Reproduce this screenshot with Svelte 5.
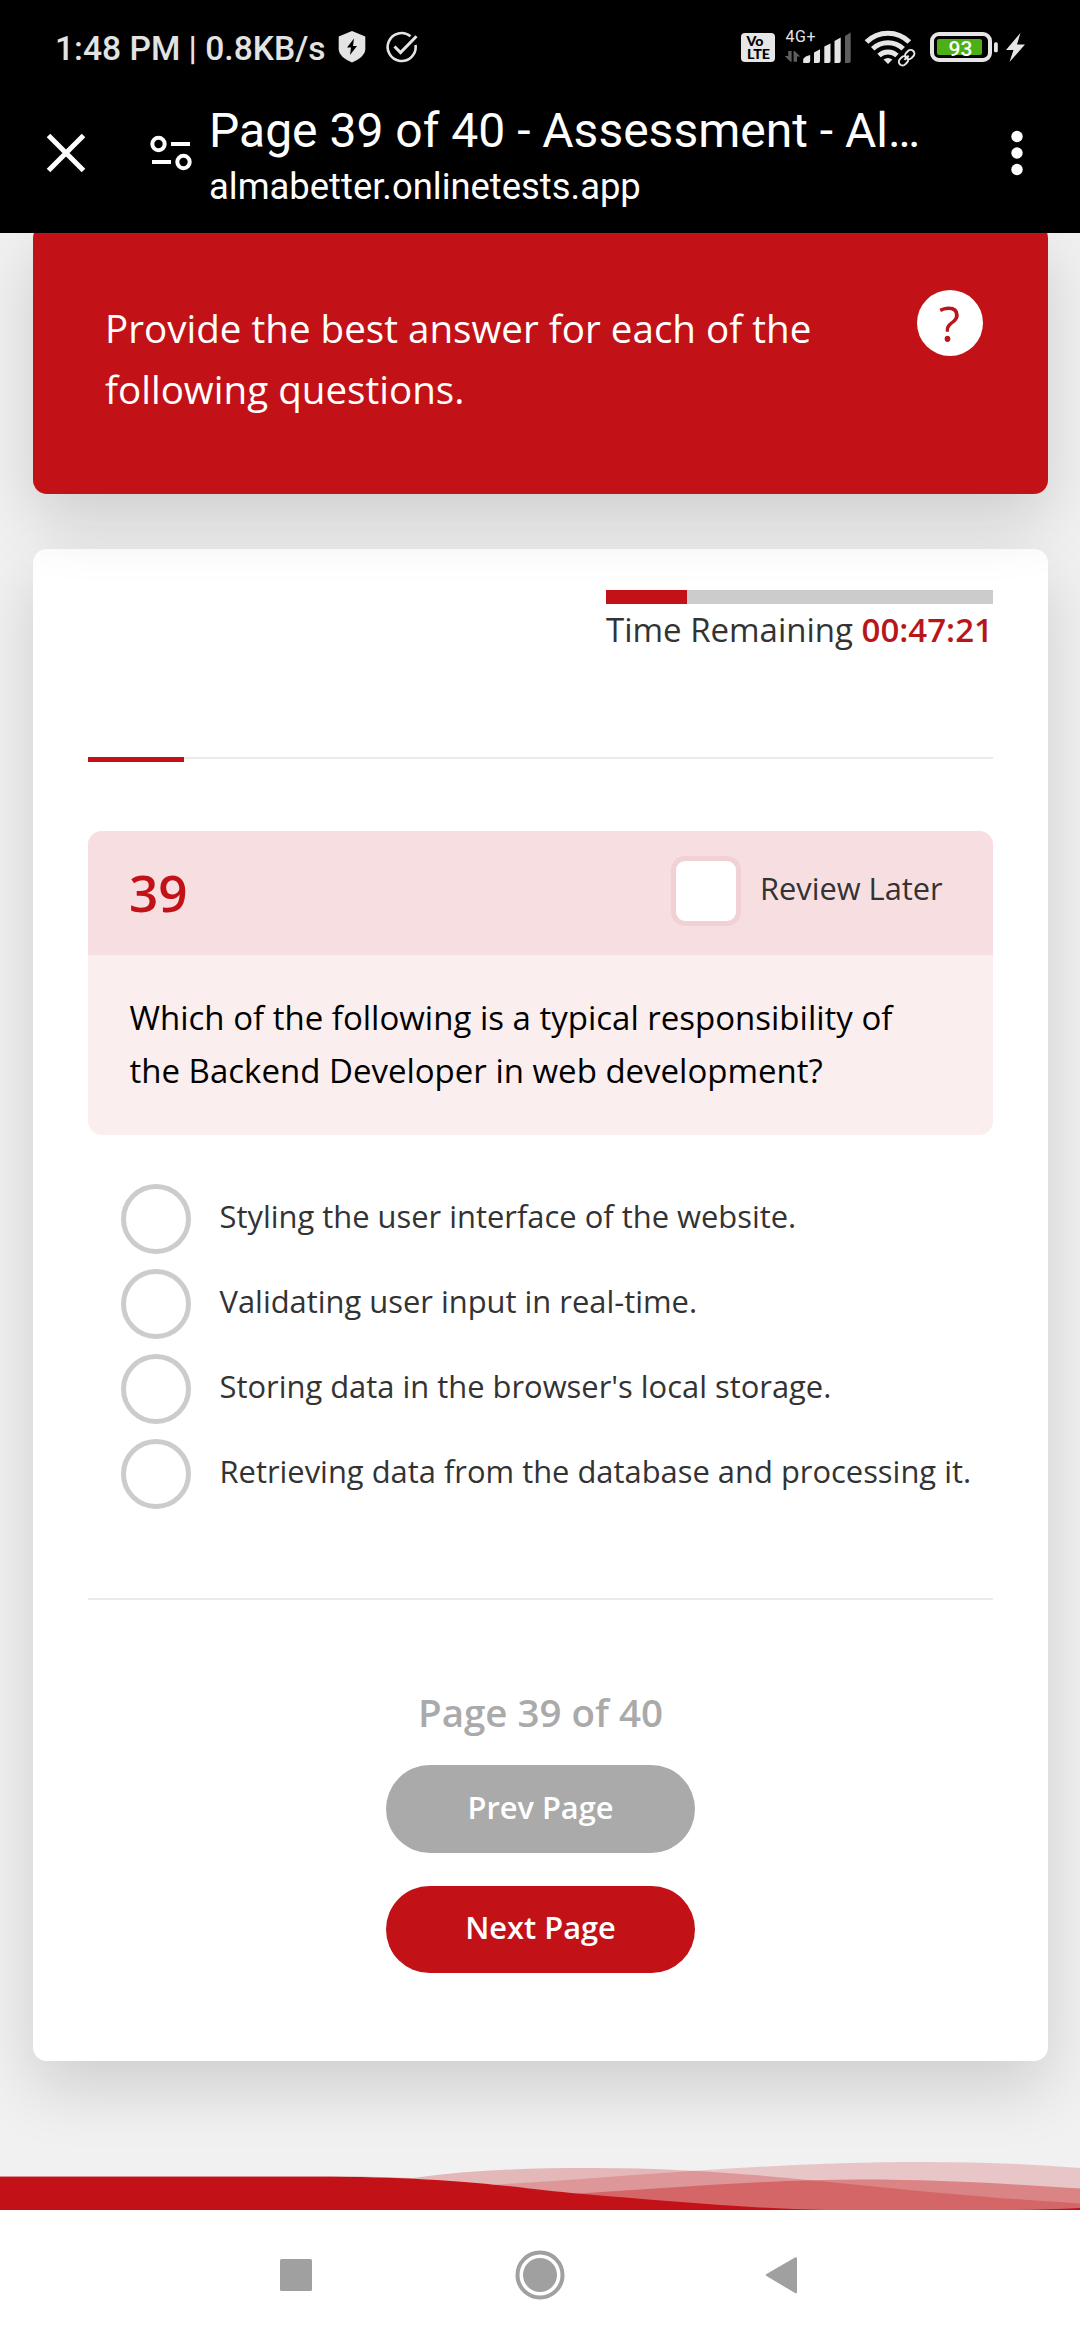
<script>
  const options = [
    'Styling the user interface of the website.',
    'Validating user input in real-time.',
    "Storing data in the browser's local storage.",
    'Retrieving data from the database and processing it.'
  ];
  const timeUsed = 21;
  const pageProgress = 10.6;
</script>

<div class="screen">
  <header>
    <div class="status">
      <span class="clock">1:48 PM | 0.8KB/s</span>
      <svg class="shield" width="28" height="40" viewBox="338 28 28 40">
        <path d="M352 31 L365.3 36.5 V49 C365.3 55 359 59.500 352 62.500 C345 59.500 338.700 55 338.700 49 V36.500 Z" fill="#e4e4e4" />
        <path d="M354 38.500 L347 47.500 H351 L350 55 L357 46 H353 Z" fill="#000" />
      </svg>
      <svg class="done" width="34" height="40" viewBox="386 28 34 40" fill="none" stroke="#e4e4e4" stroke-width="2.600">
        <path d="M410.500 36.200 A14 14 0 1 0 415.500 45" />
        <path d="M394.500 46.500 L400.500 52.500 L416.500 36.200" stroke-width="3" />
      </svg>
      <span class="grow"></span>
      <svg width="34" height="40" viewBox="741 28 34 40">
        <rect x="741" y="33" width="34" height="29" rx="4" fill="#e6e6e6" />
        <text x="746.500" y="46" class="volte" textLength="17" lengthAdjust="spacingAndGlyphs">Vo</text>
        <text x="747" y="58.700" class="volte" textLength="23" lengthAdjust="spacingAndGlyphs">LTE</text>
      </svg>
      <svg class="cell" width="68" height="40" viewBox="784 28 68 40">
        <text x="785.500" y="42" class="net" textLength="30">4G+</text>
        <g fill="#5e5e5e">
          <path d="M788.200 51 H791.600 V61.800 H790.500 L784.700 56 H788.200 Z" />
          <path d="M793.600 61.800 V51 H794.700 L800.200 56.500 H797 V61.800 Z" />
          <path d="M845 63 V36 L850.700 32.500 V61 Q850.700 63 848.700 63 Z" />
        </g>
        <g fill="#e6e6e6">
          <path d="M803.200 63 V59 Q805 56 810.200 55 V61 Q810.200 63 808.200 63 Z" />
          <path d="M814 63 V52.500 L820 49.300 V61 Q820 63 818 63 Z" />
          <path d="M824.300 63 V46.500 L830.500 43.500 V61 Q830.500 63 828.500 63 Z" />
          <path d="M834.500 63 V41 L840.700 37.500 V61 Q840.700 63 838.700 63 Z" />
        </g>
      </svg>
      <svg class="wifi" width="52" height="40" viewBox="864 28 52 40" fill="none" stroke="#e6e6e6">
        <path d="M866.500 42 A30.500 30.500 0 0 1 909.300 42" stroke-width="5.200" />
        <path d="M872.700 48.800 A22 22 0 0 1 903.200 48.800" stroke-width="5" />
        <path d="M879 55.600 A13 13 0 0 1 897 55.600" stroke-width="4.800" />
        <path d="M883.500 59.500 Q888 56.500 892.400 59.500 L888 64 Z" fill="#e6e6e6" stroke="none" />
        <g transform="rotate(-45 906.600 57.700)">
          <rect x="897.200" y="54" width="10.500" height="7.600" rx="3.800" stroke="#000" stroke-width="5" />
          <rect x="897.200" y="54" width="10" height="7.400" rx="3.700" stroke-width="2" />
          <rect x="906" y="54" width="10" height="7.400" rx="3.700" stroke-width="2" />
          <path d="M903.500 57.700 H909.500" stroke-width="2" />
        </g>
      </svg>
      <svg class="battery" width="96" height="40" viewBox="930 28 96 40">
        <rect x="932" y="34" width="58" height="26" rx="7" fill="none" stroke="#e6e6e6" stroke-width="4" />
        <rect x="937" y="39" width="45" height="16" rx="2" fill="#4caf14" />
        <rect x="994" y="42.300" width="3.800" height="10" rx="1.500" fill="#e6e6e6" />
        <text x="948.500" y="55.700" class="level" textLength="24">93</text>
        <path d="M1020.500 32.800 L1006 50 H1013.500 L1009.500 62 L1025 44.500 H1017 Z" fill="#e6e6e6" />
      </svg>
    </div>

    <div class="toolbar">
      <svg class="close" width="40" height="40" viewBox="0 0 40 40" stroke="#fff" stroke-width="5">
        <path d="M2.500 2.500 L37.500 37.500 M37.500 2.500 L2.500 37.500" />
      </svg>
      <svg class="tune" width="42" height="36" viewBox="0 0 42 36" fill="none" stroke="#fff" stroke-width="4">
        <circle cx="8.500" cy="9" r="6.200" />
        <path d="M21 9 H40 M2 27 H21" />
        <circle cx="33.500" cy="27" r="6.200" />
      </svg>
      <div class="address">
        <div class="title">Page 39 of 40 - Assessment - Al…</div>
        <div class="host">almabetter.onlinetests.app</div>
      </div>
      <svg class="more" width="12" height="46" viewBox="0 0 12 46" fill="#fff">
        <circle cx="6" cy="6.500" r="5.700" /><circle cx="6" cy="23" r="5.700" /><circle cx="6" cy="39.500" r="5.700" />
      </svg>
    </div>
  </header>

  <main>
    <section class="card intro">
      <p>Provide the best answer for each of the following questions.</p>
      <span class="help">?</span>
    </section>

    <section class="card quiz">
      <div class="timer">
        <div class="track"><div class="fill" style="width: {timeUsed}%"></div></div>
        <div class="time">Time Remaining <b>00:47:21</b></div>
      </div>

      <div class="rule"><div class="mark" style="width: {pageProgress}%"></div></div>

      <article>
        <div class="qhead">
          <span class="number">39</span>
          <span class="box"></span>
          <span class="review">Review Later</span>
        </div>
        <div class="qbody">Which of the following is a typical responsibility of the Backend Developer in web development?</div>
      </article>

      <ul>
        {#each options as option}
          <li><span class="radio"></span><span class="label">{option}</span></li>
        {/each}
      </ul>

      <div class="rule"></div>

      <div class="pager">
        <div class="page">Page 39 of 40</div>
        <button class="prev">Prev Page</button>
        <button class="next">Next Page</button>
      </div>
    </section>

    <svg class="waves" width="1080" height="60" viewBox="0 2150 1080 60" fill="#c31217">
      <path opacity=".26" d="M0 2176 H345 L413 2178 C470 2170 530 2168 592 2168 C760 2168 860 2190 1080 2203.500 V2210 H0 Z" />
      <path opacity=".19" d="M345 2210 L496 2184.500 C620 2178 760 2162 925 2162 C980 2162 1030 2164 1080 2168 V2210 Z" />
      <path opacity=".37" d="M345 2210 L580 2193.500 C670 2188 770 2179.500 861 2179.500 C940 2179.500 1010 2184 1080 2188.500 V2210 Z" />
      <path d="M0 2176.700 H330 C470 2177.500 520 2189 580 2193.800 C660 2200.500 740 2208 826 2210 H0 Z" />
      <path d="M1015 2210 Q1050 2209.500 1080 2208 V2210 Z" />
    </svg>
  </main>

  <nav>
    <svg width="32" height="34" viewBox="0 0 32 34"><rect y="1" width="32" height="32" rx="1.500" fill="#a0a0a0" /></svg>
    <svg class="home" width="50" height="50" viewBox="0 0 50 50">
      <circle cx="25" cy="25" r="22.500" fill="none" stroke="#a0a0a0" stroke-width="4" />
      <circle cx="25" cy="25" r="17" fill="#a0a0a0" />
    </svg>
    <svg class="back" width="32" height="38" viewBox="0 0 32 38">
      <path d="M30 1.500 L1.500 18 Q0 19 1.500 20 L30 37 Q32 38 32 36 V2.500 Q32 0.500 30 1.500 Z" fill="#a0a0a0" />
    </svg>
  </nav>
</div>

<style>
  :global(body) { margin: 0; background: #fff; }
  .screen { width: 1080px; height: 2340px; display: flex; flex-direction: column; overflow: hidden; font-family: 'Open Sans', sans-serif; color: #333; }
  svg { display: block; flex: none; }

  header { height: 233px; flex: none; background: #000; color: #fff; font-family: Roboto, sans-serif; }
  .status { height: 68px; box-sizing: border-box; padding: 28px 54px 0 55px; display: flex; align-items: flex-start; }
  .clock { width: 283px; line-height: 41px; font-size: 33.600px; font-weight: 500; color: #e3e3e3; white-space: nowrap; }
  .done { margin-left: 20px; }
  .grow { flex: 1; }
  .volte { font: 900 12.500px Lato, sans-serif; fill: #000; }
  .net { font: 400 16px Roboto, sans-serif; fill: #e6e6e6; }
  .level { font: 500 21px Roboto, sans-serif; fill: #fff; }
  .cell { margin-left: 9px; }
  .wifi { margin-left: 12px; }
  .battery { margin-left: 14px; }

  .toolbar { display: flex; align-items: flex-start; padding: 35px 57px 0 46px; }
  .close { margin-top: 30px; }
  .tune { margin: 32px 0 0 64px; }
  .address { flex: 1; margin-left: 17px; white-space: nowrap; }
  .title { font-size: 48px; line-height: 56px; }
  .host { margin-top: 7px; font-size: 36.400px; line-height: 42px; }
  .more { margin-top: 27px; }

  main { flex: none; height: 1977px; display: flex; flex-direction: column; background: #f1f1f1; overflow: hidden; }
  .card { margin: 0 32.500px 0 33px; border-radius: 14px; box-sizing: border-box; box-shadow: 0 27px 64px rgba(0, 0, 0, 0.145); flex: none; }
  .intro { margin-top: -9px; height: 270px; padding: 66px 65px 0 72px; display: flex; justify-content: space-between; align-items: flex-start; background: #c31217; color: #fff; position: relative; z-index: 1; }
  .intro p { margin: 8.400px 0 0; width: 750px; font-size: 38.600px; line-height: 60.700px; }
  .help { width: 66px; height: 66px; border-radius: 50%; background: #fff; color: #b9161b; font-size: 49.500px; line-height: 66px; text-align: center; }

  .quiz { margin-top: 55px; height: 1512px; padding: 41px 54.500px 0 55px; background: #fff; }
  .timer { width: 387px; height: 167px; margin-left: auto; }
  .track { height: 14px; background: #ccc; }
  .fill { height: 14px; background: #c31217; }
  .time { margin-top: 3px; font-size: 33px; line-height: 45px; white-space: nowrap; }
  .time b { font-weight: 600; color: #b9161b; }
  .rule { height: 2px; background: #ebebeb; }
  .mark { height: 5px; background: #c31217; }

  article { margin-top: 72px; height: 304px; border-radius: 14px; overflow: hidden; background: #faeeee; }
  .qhead { height: 124px; box-sizing: border-box; padding: 0 49px 0 41px; display: flex; align-items: center; background: #f7dfe1; }
  .number { flex: 1; margin-top: -2px; font-size: 51.300px; font-weight: 600; color: #c31217; }
  .box { flex: none; width: 70px; height: 70px; box-sizing: border-box; margin: -4px 19px 0 0; border: 5px solid #f2d1d4; border-radius: 14px; background: #fff; }
  .review { width: 184px; margin-top: -11px; font-size: 30.800px; white-space: nowrap; }
  .qbody { padding: 35.500px 60px 0 41.500px; font-size: 33px; line-height: 53px; color: #000; }

  ul { list-style: none; margin: 49px 0 89px; padding: 0 0 0 33px; display: flex; flex-direction: column; gap: 15px; }
  li { height: 70px; display: flex; align-items: center; }
  .radio { flex: none; width: 70px; height: 70px; box-sizing: border-box; border: 5px solid #ccc; border-radius: 50%; }
  .label { margin-left: 28.500px; padding-bottom: 7px; font-size: 30.900px; white-space: nowrap; }

  .pager { margin-top: 86px; display: flex; flex-direction: column; align-items: center; }
  .page { font-size: 38.500px; line-height: 52px; font-weight: 600; color: #aaa; }
  button { width: 309px; height: 87.500px; border: 0; border-radius: 44px; padding: 0 0 4px; color: #fff; font: 600 30.800px 'Open Sans', sans-serif; }
  .prev { margin-top: 27px; background: #aaa; }
  .next { margin-top: 33px; padding-bottom: 5px; background: #c31217; }
  .waves { margin-top: auto; }

  nav { flex: 1; display: flex; align-items: center; justify-content: flex-start; padding-left: 280px; background: #fff; }
  .home { margin-left: 203px; }
  .back { margin-left: 200px; }
</style>
